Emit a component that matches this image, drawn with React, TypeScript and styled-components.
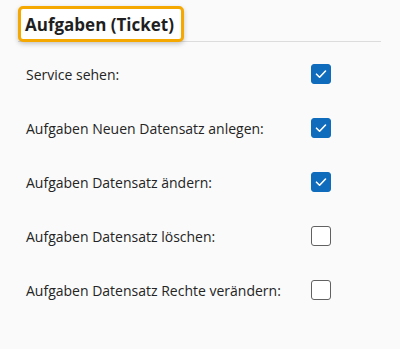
import React from 'react';
import styled, { createGlobalStyle } from 'styled-components';

const GlobalStyle = createGlobalStyle`
    html, body {
        margin: 0;
        padding: 0;
        background: #fafafa;
    }
    body {
        font-family: "Open Sans", "Noto Sans", "Liberation Sans", sans-serif;
        color: #242424;
    }
`;

interface IPermission {
    label: string;
    checked: boolean;
}

const PERMISSIONS: IPermission[] = [
    { label: 'Service sehen:', checked: true },
    { label: 'Aufgaben Neuen Datensatz anlegen:', checked: true },
    { label: 'Aufgaben Datensatz ändern:', checked: true },
    { label: 'Aufgaben Datensatz löschen:', checked: false },
    { label: 'Aufgaben Datensatz Rechte verändern:', checked: false },
];

const CheckMark = (): JSX.Element => (
    <svg width="14" height="14" viewBox="0 0 14 14" fill="none">
        <path d="M2.5 7.2 L5.6 10.2 L11.5 4" stroke="#fff" strokeWidth="1.6" strokeLinecap="round" strokeLinejoin="round" />
    </svg>
);

const App = (): JSX.Element => {
    return (
        <SPage>
            <GlobalStyle />
            <SHeader>
                <STitleBox>
                    <STitle>Aufgaben (Ticket)</STitle>
                </STitleBox>
            </SHeader>
            <SList>
                {PERMISSIONS.map((p) => (
                    <SRow key={p.label}>
                        <SLabel>{p.label}</SLabel>
                        <SCheckbox checked={p.checked} role="checkbox" aria-checked={p.checked}>
                            {p.checked && <CheckMark />}
                        </SCheckbox>
                    </SRow>
                ))}
            </SList>
        </SPage>
    );
};

const SPage = styled.div`
    width: 400px;
    height: 349px;
    box-sizing: border-box;
    padding: 6px 19px 0 18px;
`;

const SHeader = styled.div`
    display: flex;
    align-items: flex-end;
    border-bottom: 1px solid #dcdcdc;
    height: 35px;
`;

const STitleBox = styled.div`
    box-sizing: border-box;
    width: 166px;
    height: 36px;
    margin-bottom: -1px;
    border: 3px solid #f5a800;
    border-radius: 5px;
    background: #fff;
    box-shadow: 0 2px 5px rgba(0, 0, 0, 0.22);
    display: flex;
    align-items: center;
    padding-left: 4px;
`;

const STitle = styled.span`
    font-size: 17px;
    font-weight: 700;
    color: #1f1f1f;
    white-space: nowrap;
`;

const SList = styled.div`
    display: flex;
    flex-direction: column;
    padding: 5px 0 0 8px;
`;

const SRow = styled.div`
    display: grid;
    grid-template-columns: 285px 20px;
    align-items: center;
    height: 54px;
`;

const SLabel = styled.span`
    font-size: 14px;
    color: #242424;
    white-space: nowrap;
`;

const SCheckbox = styled.div<{ checked: boolean }>`
    box-sizing: border-box;
    width: 20px;
    height: 20px;
    border-radius: 3px;
    display: flex;
    align-items: center;
    justify-content: center;
    background: ${(props) => (props.checked ? '#0f6cbd' : '#fff')};
    border: 1px solid ${(props) => (props.checked ? '#0f6cbd' : '#616161')};
`;

export default App;
